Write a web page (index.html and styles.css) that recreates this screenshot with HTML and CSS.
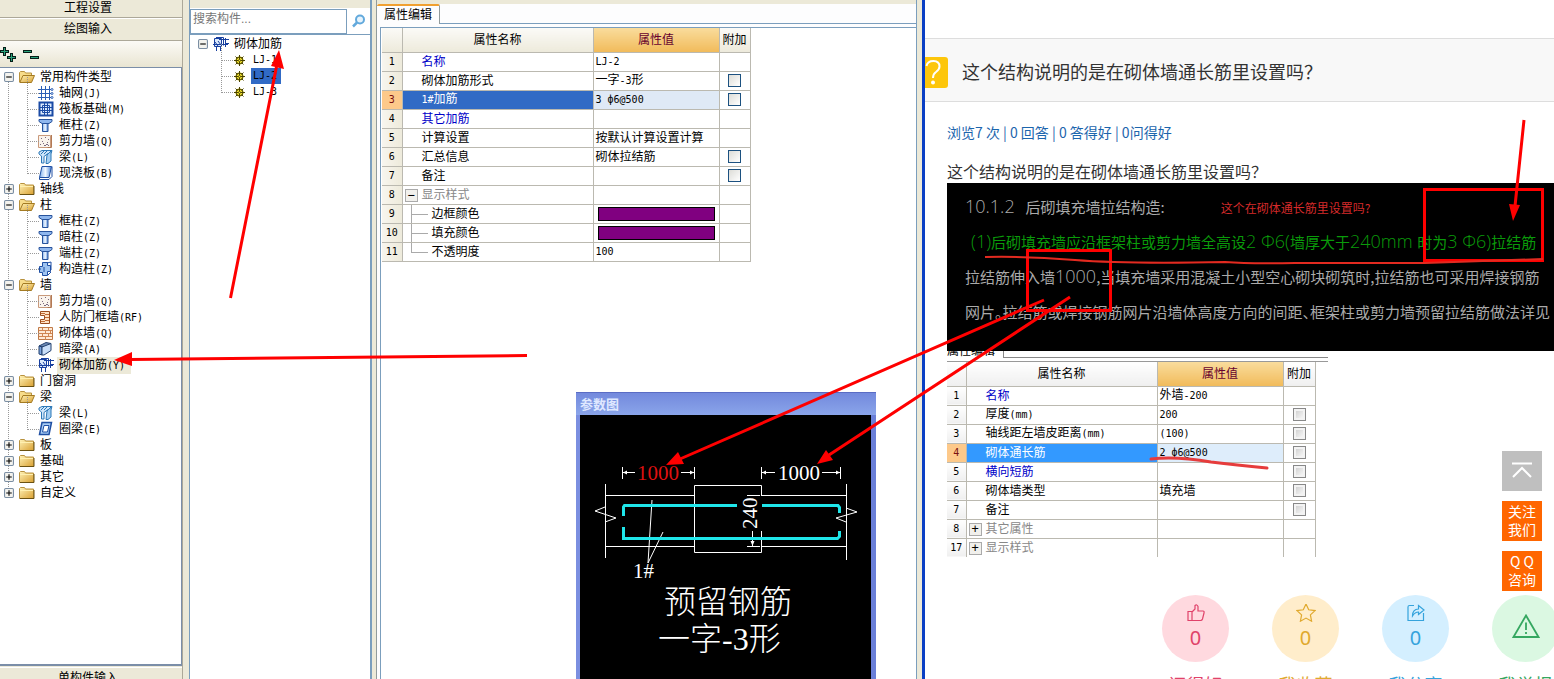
FILE: index.html
```html
<!DOCTYPE html>
<html lang="zh-CN">
<head>
<meta charset="utf-8">
<title>砌体加筋 属性编辑</title>
<link rel="stylesheet" href="styles.css">
</head>
<body>
<svg class="defs" aria-hidden="true">
  <defs>
    <linearGradient id="gold" x1="0" y1="0" x2="1" y2="1"><stop offset="0" stop-color="#fff3b8"/><stop offset="1" stop-color="#d9a032"/></linearGradient>
    <linearGradient id="blue" x1="0" y1="0" x2="1" y2="0"><stop offset="0" stop-color="#7fb0ee"/><stop offset=".5" stop-color="#f2f8ff"/><stop offset="1" stop-color="#4c86d8"/></linearGradient>
    <symbol id="plus" viewBox="0 0 9 9"><rect x=".5" y=".5" width="8" height="8" rx="1" fill="#f4f3ee" stroke="#7b8ea3"/><path d="M2 4.500h5M4.500 2v5" stroke="#000"/></symbol>
    <symbol id="minus" viewBox="0 0 9 9"><rect x=".5" y=".5" width="8" height="8" rx="1" fill="#f4f3ee" stroke="#7b8ea3"/><path d="M2 4.500h5" stroke="#000"/></symbol>
    <symbol id="folder" viewBox="0 0 16 16"><path d="M.5 13.500v-10l1-1h4l1 1.500h8v9.500z" fill="url(#gold)" stroke="#b8923f"/><path d="M1 5.500h13" stroke="#fff0b0"/><path d="M1 13.500h14V5" fill="none" stroke="#6b5212"/></symbol>
    <symbol id="folder-open" viewBox="0 0 16 16"><path d="M.5 13V3.500l1-1h4l1 1.500h6v2" fill="#f7dc8b" stroke="#b8923f"/><path d="M.8 13.500L4 6.500h11.500l-3 7z" fill="url(#gold)" stroke="#a37a22"/></symbol>
    <symbol id="mesh" viewBox="0 0 16 16"><path d="M3.500 1v14M7.500 1v14M11.500 1v14M0 4.500h13M0 8.500h13M0 12.500h13" stroke="#2b5fb5"/><g fill="none" stroke="#2b5fb5"><circle cx="14" cy="4.500" r="1"/><circle cx="14" cy="8.500" r="1"/><circle cx="14" cy="12.500" r="1"/></g></symbol>
    <symbol id="raft" viewBox="0 0 16 16"><path d="M1.500 1.500h13v13h-13z" fill="#dceafc" stroke="#1b4ba5" stroke-width="2"/><path d="M4.500 4.500h7v7h-7zM6.500 2v12M9.500 2v12M2 6.500h12M2 9.500h12" fill="none" stroke="#1b4ba5"/></symbol>
    <symbol id="column" viewBox="0 0 16 16"><path d="M1 2.500h13v2l-3 2H4l-3-2z" fill="#8fb7ee" stroke="#28539c"/><path d="M4.500 6.500h5.500v8H4.500z" fill="url(#blue)" stroke="#28539c"/></symbol>
    <symbol id="wall" viewBox="0 0 16 16"><path d="M.5 2.500h12v12H.5z" fill="#faf3ec" stroke="#c99a7c"/><path d="M13.500 2v12.500h-4" fill="none" stroke="#b37a55"/><path d="M3 5.500h1M7 4.500h1M10 6.500h1M4 8.500h1M2 11.500h1M6 12.500h2M9 9.500h1M8 11.500h2M5 10.500h1M10 12.500h1" stroke="#7a6a80"/></symbol>
    <symbol id="beam" viewBox="0 0 16 16"><path d="M1 3l3-1.500h10l-1 3h-3l-4 3V14H3.500V7L1 5z" fill="#cfe6fa" stroke="#2d79b8"/><path d="M9 6l4-4v10l-3 2.500H8z" fill="#a5cff2" stroke="#2d79b8"/><path d="M3 5l3-3M6 5l3-3" stroke="#2d79b8"/></symbol>
    <symbol id="slab" viewBox="0 0 16 16"><path d="M4 1.500h9.500l-2.500 11H1.500z" fill="url(#blue)" stroke="#1f4fa3"/><path d="M1.500 12.500v2H11l3-3v-10" fill="none" stroke="#1f4fa3"/></symbol>
    <symbol id="ring" viewBox="0 0 16 16"><path d="M4 1.500h9.500l-2.500 12H1.500z" fill="#a9ccf5" stroke="#1f4fa3" stroke-width="1.500"/><path d="M6 4.500h5l-1.500 6.500h-5z" fill="#fff" stroke="#1f4fa3"/></symbol>
    <symbol id="tie" viewBox="0 0 16 16"><path d="M4.500 1.500h5v3h3v6h-3v4h-5v-3h-3v-6h3z" fill="#9fc4f0" stroke="#1f4fa3"/><path d="M9 2l4-1v3M12 10l1-1V4M10 14l3-3M0 8h3M6 6v5" fill="none" stroke="#1f4fa3"/></symbol>
    <symbol id="door" viewBox="0 0 16 16"><path d="M2.500 2.500h9v12h-9v-4h4v-4h-4z" fill="#ffe2c5" stroke="#9c4e20"/><path d="M7 5.500h4M7 8.500h4M7 11.500h4M3 4.500h4M3 12.500h4" stroke="#c06b35"/></symbol>
    <symbol id="brick" viewBox="0 0 16 16"><path d="M.5 2.500h14v12H.5z" fill="#ffe9d3" stroke="#c07a48"/><path d="M1 5.500h13M1 8.500h13M1 11.500h13M4.500 3v3M10.500 3v3M7.500 6v3M12.500 6v3M4.500 9v3M10.500 9v3M7.500 12v3" stroke="#d08550"/></symbol>
    <symbol id="hidden-beam" viewBox="0 0 16 16"><path d="M1 5l7-3.500 5 1-6 3.500z" fill="#6e8bb5" stroke="#23406f"/><path d="M1 5l3 1v8l-3-1z" fill="#7ca4de" stroke="#23406f"/><path d="M4 6l9-3.500v7L6 14H4z" fill="#c9def8" stroke="#23406f"/></symbol>
    <symbol id="rebar" viewBox="0 0 16 16"><path d="M1.500 2.500h7v8h-7z" fill="#dceafc" stroke="#1840a0"/><path d="M3 1.500h7.500v8M0 8.500h15M6 3.500h10M12.500 2v9M3.500 10v5M7.500 10v5M2 6l3 4M5 5l3 4M12 7.500h4" fill="none" stroke="#1840a0"/></symbol>
    <symbol id="gear" viewBox="0 0 11 11"><circle cx="5.500" cy="5.500" r="4" fill="#f5e52e"/><g fill="none" stroke="#4a4300"><circle cx="5.500" cy="5.500" r="3.500"/><circle cx="5.500" cy="5.500" r="1"/><path d="M5.500 0v4M5.500 7v4M0 5.500h4M7 5.500h4M1.500 1.500l2 2M9.500 1.500l-2 2M1.500 9.500l2-2M9.500 9.500l-2-2"/></g></symbol>
  </defs>
</svg>

<div class="app">
  <section class="nav">
    <button class="bar first">工程设置</button>
    <button class="bar">绘图输入</button>
    <div class="tools">
      <button aria-label="全部展开"><svg width="17" height="17"><path d="M0 5.500h9M4.500 1v9M7 11.500h9M11.500 7v9" stroke="#061d18" stroke-width="3"/><path d="M1 5.500h7M4.500 2v7M8 11.500h7M11.500 8v7" stroke="#2aa37c"/></svg></button>
      <button aria-label="全部折叠"><svg width="17" height="17"><path d="M0 5.500h9M7 11.500h9" stroke="#061d18" stroke-width="3"/><path d="M1 5.500h7M8 11.500h7" stroke="#2aa37c"/></svg></button>
    </div>
    <ul class="tree">
      <li><div class="row"><button class="tog" aria-label="折叠"><svg><use href="#minus"/></svg></button><svg><use href="#folder-open"/></svg><span>常用构件类型</span></div>
        <ul>
          <li><svg><use href="#mesh"/></svg><span>轴网<i>(J)</i></span></li>
          <li><svg><use href="#raft"/></svg><span>筏板基础<i>(M)</i></span></li>
          <li><svg><use href="#column"/></svg><span>框柱<i>(Z)</i></span></li>
          <li><svg><use href="#wall"/></svg><span>剪力墙<i>(Q)</i></span></li>
          <li><svg><use href="#beam"/></svg><span>梁<i>(L)</i></span></li>
          <li><svg><use href="#slab"/></svg><span>现浇板<i>(B)</i></span></li>
        </ul></li>
      <li><div class="row"><button class="tog" aria-label="展开"><svg><use href="#plus"/></svg></button><svg><use href="#folder"/></svg><span>轴线</span></div></li>
      <li><div class="row"><button class="tog" aria-label="折叠"><svg><use href="#minus"/></svg></button><svg><use href="#folder-open"/></svg><span>柱</span></div>
        <ul>
          <li><svg><use href="#column"/></svg><span>框柱<i>(Z)</i></span></li>
          <li><svg><use href="#column"/></svg><span>暗柱<i>(Z)</i></span></li>
          <li><svg><use href="#column"/></svg><span>端柱<i>(Z)</i></span></li>
          <li><svg><use href="#tie"/></svg><span>构造柱<i>(Z)</i></span></li>
        </ul></li>
      <li><div class="row"><button class="tog" aria-label="折叠"><svg><use href="#minus"/></svg></button><svg><use href="#folder-open"/></svg><span>墙</span></div>
        <ul>
          <li><svg><use href="#wall"/></svg><span>剪力墙<i>(Q)</i></span></li>
          <li><svg><use href="#door"/></svg><span>人防门框墙<i>(RF)</i></span></li>
          <li><svg><use href="#brick"/></svg><span>砌体墙<i>(Q)</i></span></li>
          <li><svg><use href="#hidden-beam"/></svg><span>暗梁<i>(A)</i></span></li>
          <li class="current"><svg><use href="#rebar"/></svg><span>砌体加筋<i>(Y)</i></span></li>
        </ul></li>
      <li><div class="row"><button class="tog" aria-label="展开"><svg><use href="#plus"/></svg></button><svg><use href="#folder"/></svg><span>门窗洞</span></div></li>
      <li><div class="row"><button class="tog" aria-label="折叠"><svg><use href="#minus"/></svg></button><svg><use href="#folder-open"/></svg><span>梁</span></div>
        <ul>
          <li><svg><use href="#beam"/></svg><span>梁<i>(L)</i></span></li>
          <li><svg><use href="#ring"/></svg><span>圈梁<i>(E)</i></span></li>
        </ul></li>
      <li><div class="row"><button class="tog" aria-label="展开"><svg><use href="#plus"/></svg></button><svg><use href="#folder"/></svg><span>板</span></div></li>
      <li><div class="row"><button class="tog" aria-label="展开"><svg><use href="#plus"/></svg></button><svg><use href="#folder"/></svg><span>基础</span></div></li>
      <li><div class="row"><button class="tog" aria-label="展开"><svg><use href="#plus"/></svg></button><svg><use href="#folder"/></svg><span>其它</span></div></li>
      <li><div class="row"><button class="tog" aria-label="展开"><svg><use href="#plus"/></svg></button><svg><use href="#folder"/></svg><span>自定义</span></div></li>
    </ul>
    <button class="bar last">单构件输入</button>
  </section>

  <section class="parts">
    <div class="search">
      <input type="text" placeholder="搜索构件..." aria-label="搜索构件">
      <button aria-label="搜索"><svg width="14" height="14"><circle cx="8" cy="5.500" r="4" fill="#e6f3fc" stroke="#62a9dc" stroke-width="2"/><path d="M5 8.500L1 12.500" stroke="#62a9dc" stroke-width="2.500"/></svg></button>
    </div>
    <ul class="tree parts-tree">
      <li><div class="row"><button class="tog" aria-label="折叠"><svg><use href="#minus"/></svg></button><svg><use href="#rebar"/></svg><span>砌体加筋</span></div>
        <ul>
          <li><svg><use href="#gear"/></svg><span class="name">LJ-1</span></li>
          <li><svg><use href="#gear"/></svg><span class="name picked">LJ-2</span></li>
          <li><svg><use href="#gear"/></svg><span class="name">LJ-3</span></li>
        </ul></li>
    </ul>
  </section>

  <section class="props">
    <div class="tabs"><button class="tab">属性编辑</button></div>
    <div class="sheet">
      <table class="grid">
        <colgroup><col class="c-no"><col class="c-name"><col class="c-val"><col class="c-add"></colgroup>
        <thead><tr><th></th><th>属性名称</th><th class="hot">属性值</th><th>附加</th></tr></thead>
        <tbody>
          <tr><th>1</th><td class="key">名称</td><td><i>LJ-2</i></td><td></td></tr>
          <tr><th>2</th><td>砌体加筋形式</td><td>一字<i>-3</i>形</td><td><input type="checkbox" aria-label="附加 砌体加筋形式"></td></tr>
          <tr class="sel"><th>3</th><td><i>1#</i>加筋</td><td><i>3 ф6@500</i></td><td><input type="checkbox" aria-label="附加 1#加筋"></td></tr>
          <tr><th>4</th><td class="key">其它加筋</td><td></td><td></td></tr>
          <tr><th>5</th><td>计算设置</td><td>按默认计算设置计算</td><td></td></tr>
          <tr><th>6</th><td>汇总信息</td><td>砌体拉结筋</td><td><input type="checkbox" aria-label="附加 汇总信息"></td></tr>
          <tr><th>7</th><td>备注</td><td></td><td><input type="checkbox" aria-label="附加 备注"></td></tr>
          <tr class="group"><th>8</th><td><button aria-label="折叠">−</button>显示样式</td><td></td><td></td></tr>
          <tr class="sub"><th>9</th><td>边框颜色</td><td><span class="swatch"></span></td><td></td></tr>
          <tr class="sub"><th>10</th><td>填充颜色</td><td><span class="swatch"></span></td><td></td></tr>
          <tr class="sub end"><th>11</th><td>不透明度</td><td><i>100</i></td><td></td></tr>
        </tbody>
      </table>
    </div>
    <div class="window">
      <h2>参数图</h2>
      <svg class="diagram" width="291" height="264" viewBox="0 0 291 264">
        <g fill="none" stroke="#fff">
          <path d="M42.500 52v12M42 57.500h13M114.500 52v12M101 57.500h13M181.500 52v12M181 57.500h14M260.500 52v12M242 57.500h18"/>
          <path d="M181.500 80V70.500h-67v67h67V116"/>
          <path d="M25 80.500h89M181 80.500h85M25 131.500h89M181 131.500h85M25.500 69v74M266.500 69v76"/>
          <path d="M25 92l-10 4 21 7-11 4M266 93l11 4-21 6 10 4"/>
          <path d="M167 80.500h13M167 131.500h13M172.500 116v15M72 85l-4 63 15-31"/>
        </g>
        <path d="M43 57.500l4-2v4zM114 57.500l-4-2v4zM182 57.500l4-2v4zM260 57.500l-4-2v4zM172.500 131l-2-5h4z" fill="#fff"/>
        <path d="M43.500 101V92l1-1.500H157M182 90.500h76l1.500 2V98M43.500 112v11.500h214l2-2V116" fill="none" stroke="#1fe6ea" stroke-width="3"/>
        <g class="cad">
          <text x="57" y="65" fill="#d11">1000</text>
          <text x="198" y="65">1000</text>
          <text x="53" y="163">1#</text>
          <text transform="translate(177 114) rotate(-90)">240</text>
        </g>
        <g class="cad title">
          <text x="84" y="198">预留钢筋</text>
          <text x="78" y="235">一字-3形</text>
        </g>
      </svg>
    </div>
  </section>

  <main class="page">
    <header>
      <svg width="23" height="31"><path d="M0 0h20q3 0 3 3v25q0 3-3 3H0z" fill="#fdc60b"/><path d="M1.500 9q1-5 7-5 6 0 6 5.500 0 3-3.500 5.500-3 2-3 6" fill="none" stroke="#fff" stroke-width="2"/><circle cx="8" cy="25.500" r="2" fill="#fff"/></svg>
      <h1>这个结构说明的是在砌体墙通长筋里设置吗？</h1>
    </header>
    <article>
      <p class="stats">浏览7 次 | 0 回答 | 0 答得好 | 0问得好</p>
      <p class="ask">这个结构说明的是在砌体墙通长筋里设置吗？</p>
      <div class="note">
        <p><b>10.1.2</b>&ensp; 后砌填充墙拉结构造:<span class="remark">这个在砌体通长筋里设置吗?</span></p>
        <p class="green"><b>(1)</b>后砌填充墙应沿框架柱或剪力墙全高设<b>2 Φ6(</b>墙厚大于<b>240mm </b>时为<b>3 Φ6)</b>拉结筋</p>
        <p>拉结筋伸入墙<b>1000</b>,当填充墙采用混凝土小型空心砌块砌筑时,拉结筋也可采用焊接钢筋</p>
        <p>网片。拉结筋或焊接钢筋网片沿墙体高度方向的间距、框架柱或剪力墙预留拉结筋做法详见</p>
      </div>
      <div class="shot">
        <div class="peek"><span>属性编辑</span><span class="edge"></span></div>
        <table class="grid pale">
          <colgroup><col class="c-no"><col class="c-name"><col class="c-val"><col class="c-add"></colgroup>
          <thead><tr><th></th><th>属性名称</th><th class="hot">属性值</th><th>附加</th></tr></thead>
          <tbody>
            <tr><th>1</th><td class="key">名称</td><td>外墙<i>-200</i></td><td></td></tr>
            <tr><th>2</th><td>厚度<i>(mm)</i></td><td><i>200</i></td><td><input type="checkbox" aria-label="附加 厚度"></td></tr>
            <tr><th>3</th><td>轴线距左墙皮距离<i>(mm)</i></td><td><i>(100)</i></td><td><input type="checkbox" aria-label="附加 轴线距左墙皮距离"></td></tr>
            <tr class="sel"><th>4</th><td>砌体通长筋</td><td><i>2 ф6@500</i></td><td><input type="checkbox" aria-label="附加 砌体通长筋"></td></tr>
            <tr><th>5</th><td class="key">横向短筋</td><td></td><td><input type="checkbox" aria-label="附加 横向短筋"></td></tr>
            <tr><th>6</th><td>砌体墙类型</td><td>填充墙</td><td><input type="checkbox" aria-label="附加 砌体墙类型"></td></tr>
            <tr><th>7</th><td>备注</td><td></td><td><input type="checkbox" aria-label="附加 备注"></td></tr>
            <tr class="group"><th>8</th><td><button aria-label="展开">+</button>其它属性</td><td></td><td></td></tr>
            <tr class="group"><th>17</th><td><button aria-label="展开">+</button>显示样式</td><td></td><td></td></tr>
          </tbody>
        </table>
      </div>
      <div class="actions">
        <div class="act pink"><button><svg width="18" height="18"><path d="M1 7.500h4v9H1zM5 8l3-3V1.500q2-1.500 3 1V7h5q1.500 0 1 2l-1.500 6q-.5 1.500-2 1.500H5"/></svg>0</button><span>问得好</span></div>
        <div class="act amber"><button><svg width="20" height="18" viewBox="0 1 20 18"><path d="M10 1l2.700 5.800 6.300.8-4.600 4.300 1.200 6.300L10 15.100l-5.600 3.100 1.200-6.300L1 7.600l6.300-.8z"/></svg>0</button><span>我收藏</span></div>
        <div class="act sky"><button><svg width="18" height="18"><path d="M7 1.500H2.500q-1.500 0-1.500 1.500v13.500h15.500V9"/><path d="M5.500 12q0-7 6-7V1.500L17 6l-5.500 4.500V8Q8 8 5.500 12z"/></svg>0</button><span>我分享</span></div>
        <div class="act mint"><button aria-label="我举报"><svg width="28" height="25"><path d="M14 1.500L26.500 23h-25zM14 8.500v7.500M14 18v2" stroke-width="1.800"/></svg></button><span>我举报</span></div>
      </div>
    </article>
    <aside>
      <button class="top" aria-label="返回顶部"><svg width="22" height="18"><path d="M1 2.500h20M2 16L11 7l9 9" fill="none" stroke="#fff" stroke-width="2"/></svg></button>
      <button>关注<br>我们</button>
      <button>Q Q<br>咨询</button>
    </aside>
  </main>
</div>

<svg class="marks" width="1554" height="679" aria-hidden="true">
  <g fill="none" stroke="#f00" stroke-width="3">
    <path d="M230.500 298L277 64M527 355.500L130 359.500M1044 300L680 459M1070 297L829 455M1524 120L1515 206"/>
    <path d="M1027.500 250.500h83v60h-83zM1424.500 189.500h118v71h-118z"/>
  </g>
  <path d="M279 50l5 19-13-3zM114 360l18-8v14zM666 465l12-13 6 12zM817 464l9-14 7 10zM1513 221l-4-17 11 1z" fill="#f00"/>
  <path d="M985 257q40-1 90 3t150 2q25 2 70 1l130 0 118-4" fill="none" stroke="#e32a20" stroke-width="2"/>
  <path d="M1151 459q25-3 60 3 25 3 56 6" fill="none" stroke="#e63c3c" stroke-width="3" stroke-linecap="round"/>
</svg>
</body>
</html>
```
FILE: styles.css
```css
* { box-sizing: border-box; }
body {
  margin: 0;
  height: 100vh;
  overflow: hidden;
  position: relative;
  background: #fff;
  color: #000;
  font: 12px/16px "Liberation Sans", "Noto Sans CJK SC", sans-serif;
}
button, input { font: inherit; color: inherit; margin: 0; }
button { padding: 0; border: 0; background: none; }
svg { display: block; flex: none; }
ul { list-style: none; margin: 0; padding: 0; }
p, h1, h2 { margin: 0; font-weight: normal; }
i { font: 10px/16px "DejaVu Sans Mono", monospace; }
.defs { position: absolute; width: 0; height: 0; }
.marks { position: absolute; left: 0; top: 0; pointer-events: none; }

.app { display: flex; height: 100%; background: #ece9d8; }

/* module navigation */
.nav { width: 183px; height: calc(100% + 10px); flex: none; display: flex; flex-direction: column; border-right: 1px solid #aca899; }
.bar { height: 23px; padding: 0 6px 2px 0; border-top: 1px solid #fff; border-bottom: 1px solid #aca899; text-align: center; }
.bar.first { height: 18px; padding-bottom: 4px; border-top: 0; }
.bar.last { height: 22px; border-bottom: 0; margin-top: 1px; }
.tools { display: flex; align-items: flex-start; gap: 6px; height: 26px; padding-top: 5px; background: linear-gradient(#fbfaf6, #e9e5d2); }
.nav .tree { flex: 1; border: 1px solid #7b8ea8; border-left: 0; border-bottom-width: 2px; }

.tree { background: #fff; padding-top: 1px; white-space: nowrap; }
.tree li { position: relative; }
.tree svg { width: 16px; height: 16px; }
.row { display: flex; align-items: center; height: 16px; padding-left: 4px; gap: 5px; }
.tree .tog { position: relative; z-index: 1; }
.tree .tog svg { width: 10px; height: 10px; }
.tree > li::before { content: ""; position: absolute; left: 8px; top: 8px; bottom: -8px; border-left: 1px dotted #999; }
.tree > li:last-child::before { display: none; }
.tree li li { display: flex; align-items: center; height: 16px; padding-left: 38px; gap: 3px; }
.tree li li span { padding: 0 2px; }
.tree li li::before { content: ""; position: absolute; left: 27px; top: -8px; height: 16px; width: 11px; border-left: 1px dotted #999; border-bottom: 1px dotted #999; }
.tree .current span { background: #ece9d8; padding-right: 6px; }

/* component list */
.parts { width: 183px; margin-left: 6px; flex: none; display: flex; flex-direction: column; border: solid #7b9ebd; border-width: 0 2px 0 1px; background: #fff; }
.search { display: flex; border-top: 8px solid #ece9d8; height: 34px; }
.search input { flex: 1; min-width: 0; height: 25px; margin-top: 1px; padding: 0 2px 6px; border: 1px solid #7b9ebd; background: #fff; }
.search input::placeholder { color: #777; }
.search button { width: 23px; display: grid; place-items: center; }
.parts-tree { flex: 1; border-top: 1px solid #7b9ebd; }
.parts-tree .row { padding-left: 8px; }
.parts-tree li li { padding-left: 44px; gap: 6px; }
.parts-tree li li::before { left: 31px; }
.parts-tree li li svg { width: 11px; height: 11px; }
.parts-tree .name { font: 10px/16px "DejaVu Sans Mono", monospace; }
.parts-tree li li .name { padding: 0 4px 0 2px; }
.parts-tree .picked { background: #316ac5; }

/* property editor */
.props { position: relative; width: 541px; margin-left: 4px; flex: none; display: flex; flex-direction: column; background: #fdfdfe; border-left: 1px solid #919b9c; border-right: 1px solid #7b9ebd; }
.props::after { content: ""; position: absolute; top: 0; bottom: 0; left: 100%; width: 5px; margin-left: 1px; background: #ece9d8; border-right: 4px solid #0a3fc4; }
.tabs { display: flex; height: 24px; border-top: 4px solid #ece9d8; background: linear-gradient(#7b9ebd, #7b9ebd) bottom / 100% 1px no-repeat; }
.tab { width: 63px; padding-bottom: 1px; background: #fdfdfe; border-top: 2px solid #f0a030; border-right: 1px solid #919b9c; border-radius: 2px 2px 0 0; }
.sheet { flex: 1; margin: 3px 0 0 3px; padding-left: 1px; border-top: 1px solid #7b9ebd; border-left: 1px solid #7b9ebd; background: #fff; }

.grid { width: 368px; table-layout: fixed; border-collapse: collapse; }
.c-no { width: 20px; }
.c-name { width: 191px; }
.c-val { width: 126px; }
.c-add { width: 31px; }
.grid th, .grid td { height: 19px; padding: 0 2px; border-right: 1px solid #bbb9b0; border-bottom: 1px solid #bbb9b0; font-weight: normal; text-align: left; white-space: nowrap; line-height: 16px; }
.grid thead th { height: 24px; padding: 0; text-align: center; background: linear-gradient(#fbfaf7, #edeadb); }
.grid thead .hot { background: linear-gradient(#f9dc9c, #f1bb5b); color: #66002e; }
.grid tbody th { padding: 0; text-align: center; background: linear-gradient(90deg, #f7f5ee, #edeadb); font: 10px/16px "DejaVu Sans Mono", monospace; }
.grid td:nth-child(2) { padding-left: 19px; }
.grid td:last-child { padding: 0; }
.grid .key { color: #0000c8; }
.grid .sel th { background: #fdc98a; color: #7a1010; }
.grid .sel td:nth-child(2) { background: #316ac5; color: #fff; }
.grid .sel td:nth-child(3) { background: #dfe9f6; }
.grid .group td:nth-child(2) { padding-left: 2px; color: #888; }
.grid .group button { width: 13px; height: 13px; margin-right: 4px; border: 1px solid #aaa; background: #f1f0ec; color: #000; font: 12px/11px "DejaVu Sans Mono", monospace; vertical-align: middle; }
.grid .sub td:nth-child(2) { padding-left: 29px; background: linear-gradient(#aaa, #aaa) 8px 0 / 1px 100% no-repeat, linear-gradient(#aaa, #aaa) 8px 9px / 17px 1px no-repeat; }
.grid .end td:nth-child(2) { background-size: 1px 10px, 17px 1px; }
.swatch { display: block; height: 14px; margin: 0 2px; border: 1px solid #000; background: #800080; }
.grid input { appearance: none; display: block; width: 13px; height: 13px; margin: 0 auto; border: 1px solid #1c5180; background: linear-gradient(135deg, #dcdcd7, #fff); }

.window { position: absolute; right: 40px; bottom: 0; width: 300px; height: 287px; padding: 0 4px; overflow: hidden; background: linear-gradient(90deg, #7b8fe0, #6a7fd8); }
.window h2 { height: 23px; margin: 0 -4px; padding: 4px 4px 0; border-top: 1px solid #5a6cc4; background: linear-gradient(#7389dd, #8aa5ea); color: #dfe8ff; font-size: 13px; font-weight: bold; }
.diagram { background: #000; }
.cad { fill: #fff; font: 21px "Liberation Serif", "Noto Sans CJK SC", serif; }
.cad.title { font-size: 32px; font-weight: 300; }

/* question page */
.page { flex: 1; min-width: 0; margin-left: 8px; position: relative; overflow: hidden; background: #fff; color: #333; font-family: "Noto Sans CJK SC", sans-serif; }
.page header { display: flex; align-items: center; gap: 14px; height: 64px; margin-top: 38px; padding-top: 4px; background: #f8f8f8; border: solid #ddd; border-width: 1px 0; }
.page h1 { font-size: 18px; line-height: 24px; white-space: nowrap; padding-bottom: 2px; }
.page article { margin-left: 22px; }
.stats { padding-top: 20px; font-size: 14px; line-height: 20px; color: #1c65ad; white-space: nowrap; }
.ask { padding-top: 17px; font-size: 16px; line-height: 24px; white-space: nowrap; }
.note { height: 168px; padding: 6px 0 0 18px; overflow: hidden; background: #000; color: #aaa; font-size: 15px; font-weight: 300; line-height: 35px; font-feature-settings: "halt"; }
.note p { height: 35px; white-space: nowrap; }
.note b { font: 300 18px/32px "Open Sans", "Noto Sans CJK SC", sans-serif; }
.note .green { padding-left: 6px; color: #0a9a0a; }
.note .remark { margin-left: 56px; font-size: 12px; color: #d42a2a; }
.shot { color: #000; font-family: "Liberation Sans", "Noto Sans CJK SC", sans-serif; }
.peek { display: flex; align-items: flex-end; width: 381px; height: 11px; border-bottom: 1px solid #999; }
.peek span { height: 7px; margin-bottom: 3px; width: 56px; overflow: hidden; line-height: 0; }
.peek .edge { flex: 1; width: auto; border: solid #888; border-width: 0 0 1px 1px; }
.pale .c-no { width: 19px; }
.pale .c-add { width: 32px; }
.pale thead th, .pale tbody th { background: linear-gradient(#fff, #efefef); }
.pale .sel td:nth-child(2) { background: #3399ff; }
.pale .sel td:nth-child(3) { background: #deedfb; }
.pale tbody tr:last-child > * { border-bottom: 0; }
.pale input { border: 1px solid #888; box-shadow: inset 0 0 0 2px #f3f3f3; background: linear-gradient(135deg, #c9c9c9, #fff); }

.actions { display: flex; gap: 43px; margin: 38px 0 0 215px; }
.act { display: flex; flex-direction: column; align-items: center; width: 67px; flex: none; font-size: 18px; line-height: 24px; white-space: nowrap; }
.act button { display: flex; flex-direction: column; align-items: center; justify-content: center; gap: 4px; width: 67px; height: 67px; padding-bottom: 4px; border-radius: 50%; font: 20px/24px "Noto Sans", sans-serif; }
.act svg { fill: none; stroke: currentColor; stroke-width: 1.2; }
.act span { margin-top: 10px; }
.pink { color: #e0426a; } .pink button { background: #ffd9df; }
.amber { color: #e0a92e; } .amber button { background: #ffedcb; }
.sky { color: #35a3dc; } .sky button { background: #d4efff; }
.mint { color: #35a760; } .mint button { background: #dbf8e2; }

aside { position: absolute; right: 12px; top: 451px; display: flex; flex-direction: column; gap: 10px; }
aside button { width: 40px; height: 40px; padding-bottom: 2px; background: #ff6600; color: #fff; font-size: 14px; line-height: 18px; }
aside .top { display: grid; place-items: center; background: #bfbfbf; }
```
